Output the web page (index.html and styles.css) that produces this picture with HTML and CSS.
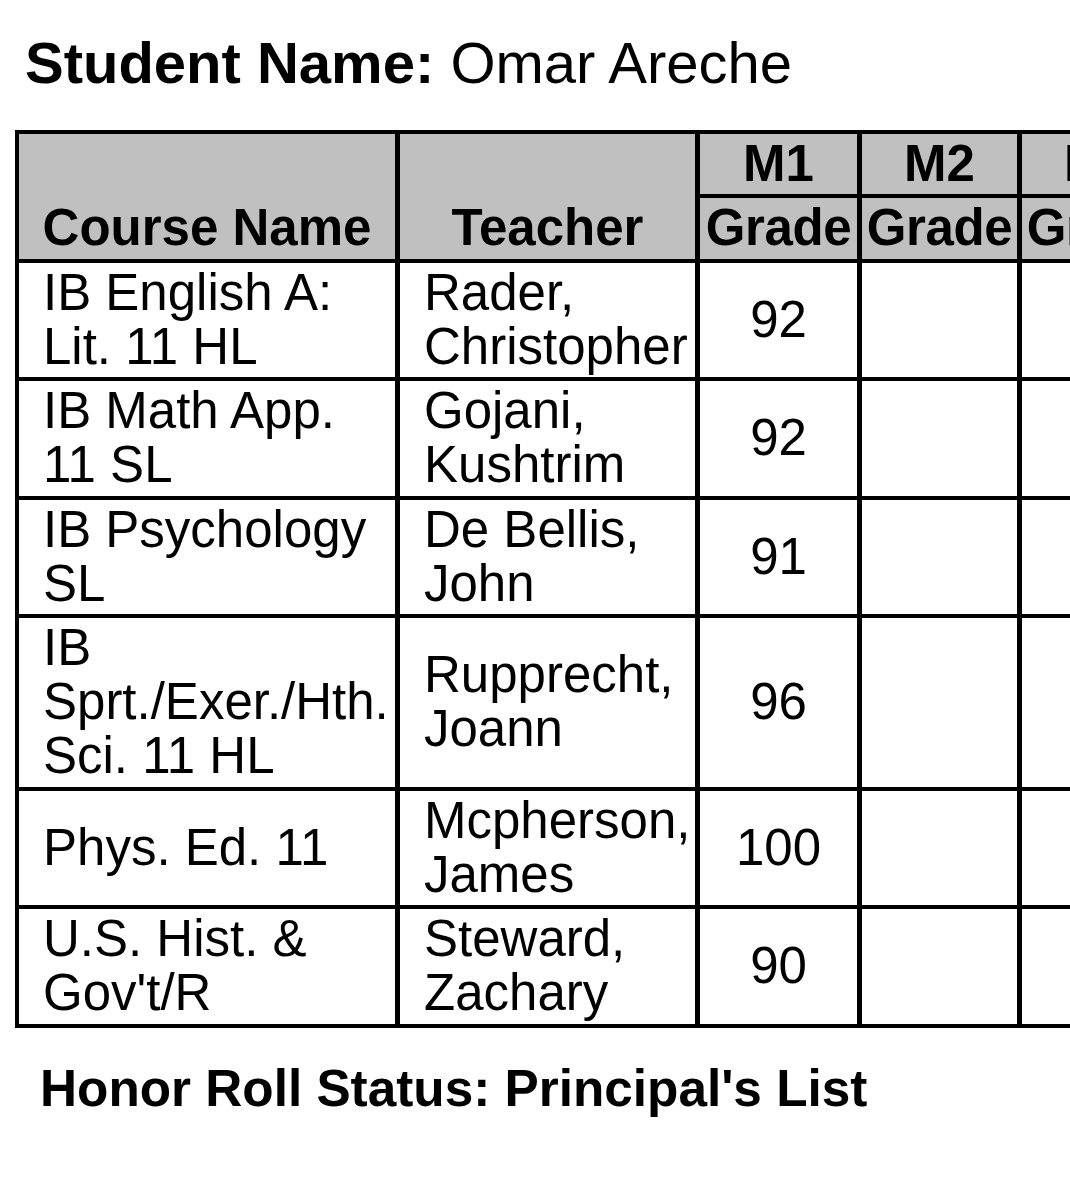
FILE: index.html
```html
<!DOCTYPE html>
<html>
<head>
<meta charset="utf-8">
<link rel="stylesheet" href="styles.css">
</head>
<body>
<div class="page">
  <h1 class="student"><span class="label">Student Name:</span> Omar Areche</h1>
  <div class="table-wrap">
    <table class="grades">
      <colgroup>
        <col class="c-course">
        <col class="c-teacher">
        <col class="c-grade">
        <col class="c-grade2">
        <col class="c-grade2">
      </colgroup>
      <thead>
        <tr class="hrow-a">
          <th rowspan="2" class="h-main">Course Name</th>
          <th rowspan="2" class="h-main">Teacher</th>
          <th class="h-mp">M1</th>
          <th class="h-mp">M2</th>
          <th class="h-mp">M3</th>
        </tr>
        <tr class="hrow-b">
          <th class="h-grade">Grade</th>
          <th class="h-grade">Grade</th>
          <th class="h-grade">Grade</th>
        </tr>
      </thead>
      <tbody>
        <tr>
          <td class="txt">IB English A:<br>Lit. 11 HL</td>
          <td class="txt">Rader,<br>Christopher</td>
          <td class="num">92</td>
          <td></td>
          <td></td>
        </tr>
        <tr>
          <td class="txt">IB Math App.<br>11 SL</td>
          <td class="txt">Gojani,<br>Kushtrim</td>
          <td class="num">92</td>
          <td></td>
          <td></td>
        </tr>
        <tr>
          <td class="txt">IB Psychology<br>SL</td>
          <td class="txt">De Bellis,<br>John</td>
          <td class="num">91</td>
          <td></td>
          <td></td>
        </tr>
        <tr>
          <td class="txt">IB<br>Sprt./Exer./Hth.<br>Sci. 11 HL</td>
          <td class="txt">Rupprecht,<br>Joann</td>
          <td class="num">96</td>
          <td></td>
          <td></td>
        </tr>
        <tr>
          <td class="txt">Phys. Ed. 11</td>
          <td class="txt">Mcpherson,<br>James</td>
          <td class="num">100</td>
          <td></td>
          <td></td>
        </tr>
        <tr>
          <td class="txt">U.S. Hist. &amp;<br>Gov't/R</td>
          <td class="txt">Steward,<br>Zachary</td>
          <td class="num">90</td>
          <td></td>
          <td></td>
        </tr>
      </tbody>
    </table>
  </div>
  <p class="honor">Honor Roll Status: Principal's List</p>
</div>
</body>
</html>
```

FILE: styles.css
```css
html, body {
  margin: 0;
  padding: 0;
  background: #ffffff;
}

body {
  font-family: "Liberation Sans", Arial, Helvetica, sans-serif;
  color: #000000;
  overflow: hidden;
}

.page {
  width: 1070px;
  overflow: hidden;
  padding-top: 30px;
}

.student {
  margin: 0 0 34px 25px;
  font-size: 58px;
  line-height: 1.13;
  font-weight: normal;
  white-space: nowrap;
}

.student .label {
  font-weight: bold;
}

.table-wrap {
  width: 1055px;
  margin-left: 15px;
  overflow: hidden;
}

.grades {
  border-collapse: separate;
  border-spacing: 0;
  table-layout: fixed;
  width: 1167px;
  border-top: 4px solid #000;
  border-left: 4px solid #000;
  font-size: 51px;
  line-height: 54px;
}

.c-course { width: 381px; }
.c-teacher { width: 300px; }
.c-grade { width: 162px; }
.c-grade2 { width: 160px; }

.grades th,
.grades td {
  box-sizing: border-box;
  border-right: 5px solid #000;
  border-bottom: 4px solid #000;
  padding: 3px 0 3.5px;
  white-space: nowrap;
}

.grades th {
  background: #c0c0c0;
  font-weight: bold;
  text-align: center;
}

.h-main {
  vertical-align: bottom;
  border-bottom-width: 5px;
  padding-bottom: 2px;
}

.h-mp {
  vertical-align: middle;
  padding: 3px 0;
}

.h-grade {
  border-bottom-width: 5px;
  padding: 3px 0 4px;
  letter-spacing: -0.4px;
}

.grades td.txt {
  padding: 3px 2px 3.5px 24px;
  vertical-align: middle;
  text-align: left;
  overflow: hidden;
}

.grades td.num {
  text-align: center;
  vertical-align: middle;
}

.honor {
  margin: 32px 0 0 40px;
  font-size: 51.3px;
  line-height: 1.15;
  font-weight: bold;
  white-space: nowrap;
}
```
